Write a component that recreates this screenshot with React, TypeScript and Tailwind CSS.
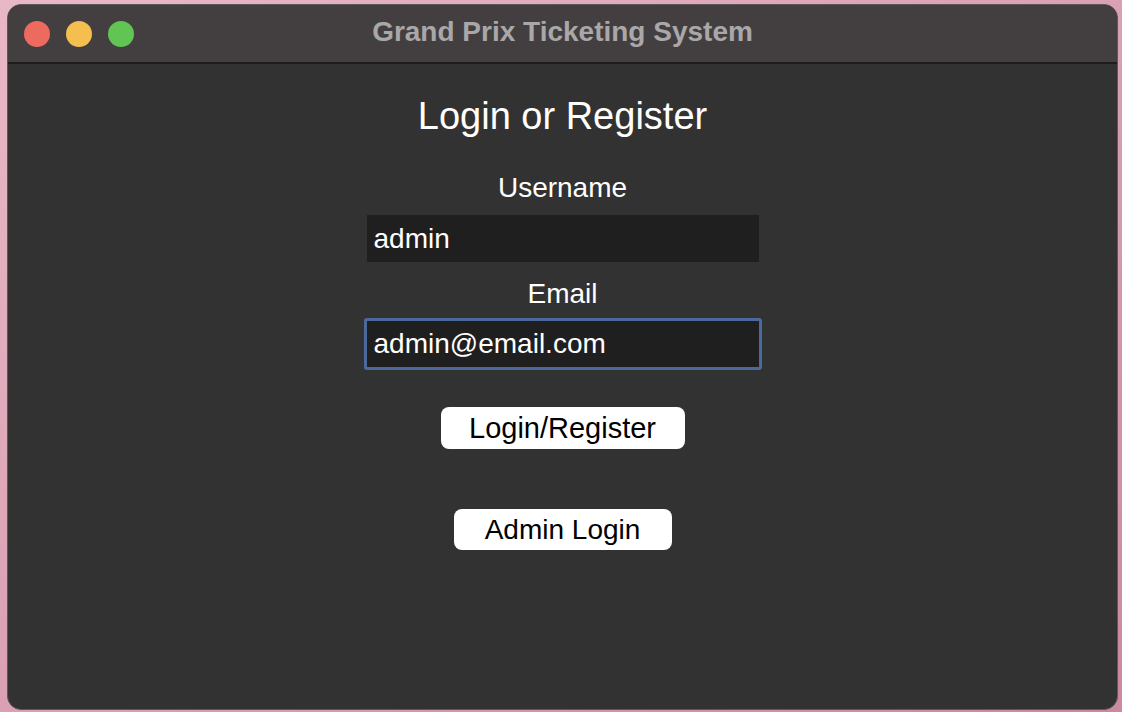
import React from 'react'

const font = { fontFamily: '"Liberation Sans", Arial, sans-serif' }

function TrafficLights() {
  return (
    <div className="flex items-center gap-[16px]">
      <span className="block h-[26px] w-[26px] rounded-full bg-[#ed6a5e]" />
      <span className="block h-[26px] w-[26px] rounded-full bg-[#f5bf4f]" />
      <span className="block h-[26px] w-[26px] rounded-full bg-[#61c554]" />
    </div>
  )
}

export default function App() {
  return (
    <div
      className="h-[712px] w-[1122px] overflow-hidden bg-gradient-to-br from-[#e9b8c6] to-[#c98aa0] pl-[7px] pr-[4px] pt-[4px] pb-[2px]"
      style={font}
    >
      <div className="flex h-full flex-col overflow-hidden rounded-[14px] border border-[#5a5859] bg-[#323232]">
        {/* title bar */}
        <div className="relative flex h-[59px] shrink-0 items-center border-b-2 border-[#1c1c1c] bg-[#433f40] px-[16px]">
          <TrafficLights />
          <div className="absolute inset-0 flex items-center justify-center pb-[4px] text-[28px] font-bold text-[#aaa7a8]">
            Grand Prix Ticketing System
          </div>
        </div>

        {/* body */}
        <div className="flex flex-col items-center pt-[29px] text-white">
          <h1 className="text-[38px] leading-[46px]">Login or Register</h1>

          <label className="mt-[33px] text-[28px] leading-[32px]">Username</label>
          <div className="mt-[11px] flex h-[47px] w-[392px] items-center bg-[#1f1f1f] px-[7px] text-[28px]">
            admin
          </div>

          <label className="mt-[16px] text-[28px] leading-[32px]">Email</label>
          <div className="mt-[8px] flex h-[52px] w-[398px] items-center rounded-[3px] border-[3px] border-[#4a6a9b] bg-[#1f1f1f] px-[7px] text-[28px]">
            admin@email.com
          </div>

          <button className="mt-[37px] h-[42px] w-[244px] rounded-[8px] bg-white text-[29px] text-black">
            Login/Register
          </button>

          <button className="mt-[60px] h-[41px] w-[218px] rounded-[8px] bg-white text-[28px] text-black">
            Admin Login
          </button>
        </div>
      </div>
    </div>
  )
}
